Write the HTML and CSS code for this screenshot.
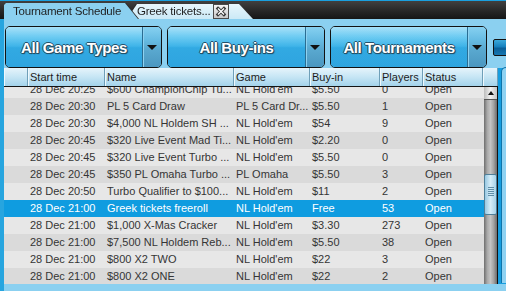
FILE: index.html
```html
<!DOCTYPE html>
<html>
<head>
<meta charset="utf-8">
<link rel="stylesheet" href="styles.css">
</head>
<body>
<div class="tabbar">
  <div class="tab-wrap active-wrap"><div class="tab tab-active">Tournament Schedule</div></div>
  <div class="tab-wrap other-wrap">
    <div class="tab tab-other"><span class="tab-text">Greek tickets...</span>
      <span class="close"><svg width="12" height="11" viewBox="0 0 12 11"><path d="M3 2.5L9 8.5M9 2.5L3 8.5" stroke="#3a3a3a" stroke-width="3.2" stroke-linecap="square"/><path d="M3 2.5L9 8.5M9 2.5L3 8.5" stroke="#ffffff" stroke-width="1.4"/></svg></span>
    </div>
  </div>
</div>
<div class="content">
  <div class="toolbar">
    <div class="dd w157"><div class="dd-label">All Game Types</div><div class="dd-arrow"><span class="tri"></span></div></div>
    <div class="dd w158"><div class="dd-label">All Buy-ins</div><div class="dd-arrow"><span class="tri"></span></div></div>
    <div class="dd w157"><div class="dd-label">All Tournaments</div><div class="dd-arrow"><span class="tri"></span></div></div>
    <div class="mini"></div>
  </div>
  <div class="panel">
    <div class="grid">
      <div class="hdr">
        <div class="hc c0"></div>
        <div class="hc c1">Start time</div>
        <div class="hc c2">Name</div>
        <div class="hc c3">Game</div>
        <div class="hc c4">Buy-in</div>
        <div class="hc c5">Players</div>
        <div class="hc c6">Status</div>
        <div class="hc c7"></div>
      </div>
      <div class="body">
        <div class="rows">
          <div class="rows-inner">
            <div class="row"><span class="c0"></span><span class="c1">28 Dec 20:25</span><span class="c2">$600 ChampionChip Tu...</span><span class="c3">NL Hold'em</span><span class="c4">$5.50</span><span class="c5">0</span><span class="c6">Open</span></div>
            <div class="row"><span class="c0"></span><span class="c1">28 Dec 20:30</span><span class="c2">PL 5 Card Draw</span><span class="c3">PL 5 Card Dr...</span><span class="c4">$5.50</span><span class="c5">1</span><span class="c6">Open</span></div>
            <div class="row"><span class="c0"></span><span class="c1">28 Dec 20:30</span><span class="c2">$4,000 NL Holdem SH ...</span><span class="c3">NL Hold'em</span><span class="c4">$54</span><span class="c5">9</span><span class="c6">Open</span></div>
            <div class="row"><span class="c0"></span><span class="c1">28 Dec 20:45</span><span class="c2">$320 Live Event Mad Ti...</span><span class="c3">NL Hold'em</span><span class="c4">$2.20</span><span class="c5">0</span><span class="c6">Open</span></div>
            <div class="row"><span class="c0"></span><span class="c1">28 Dec 20:45</span><span class="c2">$320 Live Event Turbo ...</span><span class="c3">NL Hold'em</span><span class="c4">$5.50</span><span class="c5">0</span><span class="c6">Open</span></div>
            <div class="row"><span class="c0"></span><span class="c1">28 Dec 20:45</span><span class="c2">$350 PL Omaha Turbo ...</span><span class="c3">PL Omaha</span><span class="c4">$5.50</span><span class="c5">3</span><span class="c6">Open</span></div>
            <div class="row"><span class="c0"></span><span class="c1">28 Dec 20:50</span><span class="c2">Turbo Qualifier to $100...</span><span class="c3">NL Hold'em</span><span class="c4">$11</span><span class="c5">2</span><span class="c6">Open</span></div>
            <div class="row sel"><span class="c0"></span><span class="c1">28 Dec 21:00</span><span class="c2">Greek tickets freeroll</span><span class="c3">NL Hold'em</span><span class="c4">Free</span><span class="c5">53</span><span class="c6">Open</span></div>
            <div class="row"><span class="c0"></span><span class="c1">28 Dec 21:00</span><span class="c2">$1,000 X-Mas Cracker</span><span class="c3">NL Hold'em</span><span class="c4">$3.30</span><span class="c5">273</span><span class="c6">Open</span></div>
            <div class="row"><span class="c0"></span><span class="c1">28 Dec 21:00</span><span class="c2">$7,500 NL Holdem Reb...</span><span class="c3">NL Hold'em</span><span class="c4">$5.50</span><span class="c5">38</span><span class="c6">Open</span></div>
            <div class="row"><span class="c0"></span><span class="c1">28 Dec 21:00</span><span class="c2">$800 X2 TWO</span><span class="c3">NL Hold'em</span><span class="c4">$22</span><span class="c5">3</span><span class="c6">Open</span></div>
            <div class="row"><span class="c0"></span><span class="c1">28 Dec 21:00</span><span class="c2">$800 X2 ONE</span><span class="c3">NL Hold'em</span><span class="c4">$22</span><span class="c5">2</span><span class="c6">Open</span></div>
          </div>
        </div>
        <div class="scroll">
          <div class="sb-up"><span class="tri-up"></span></div>
          <div class="sb-thumb"><span class="grip"></span></div>
        </div>
      </div>
    </div>
    <div class="edge"><div class="edge-panel"></div></div>
  </div>
</div>
</body>
</html>
```
FILE: styles.css
```css
* { box-sizing: border-box; }
html, body { margin: 0; padding: 0; }
body {
  width: 506px;
  height: 291px;
  overflow: hidden;
  background: #8bd0f0;
  font-family: "Liberation Sans", Arial, sans-serif;
  font-size: 11px;
  color: #222;
}

/* ---------- tabs ---------- */
.tabbar {
  height: 19px;
  display: flex;
  padding-left: 4px;
  background: linear-gradient(#1aa0e0 0, #1aa0e0 1px, #404040 1px, #262626 60%, #161616 100%);
}
.tab-wrap { height: 19px; }
.active-wrap { position: relative; z-index: 2; filter: drop-shadow(1px 0 0 #2a2a2a); }
.other-wrap { margin-left: -11px; z-index: 1; filter: drop-shadow(-1px 0 0 #2a2a2a); }
.tab {
  display: flex;
  align-items: center;
  white-space: nowrap;
  color: #1e1e1e;
}
.tab-active {
  margin-top: 3px;
  height: 16px;
  width: 134px;
  padding-left: 9px;
  font-size: 11.5px;
  letter-spacing: -0.2px;
  background: #8bd0f0;
  clip-path: polygon(0 16px, 0 2px, 2px 0, 121px 0, 134px 16px);
}
.tab-other {
  margin-top: 4px;
  height: 15px;
  width: 126px;
  padding-left: 10px;
  font-size: 11.5px;
  letter-spacing: -0.2px;
  background: linear-gradient(#e8f6fc, #cbe9f6);
  clip-path: polygon(0 15px, 10px 0, 112px 0, 126px 15px);
}
.tab-text { line-height: 15px; }
.close {
  margin-left: 2px;
  width: 16px;
  height: 15px;
  border: 1px solid #4a4a4a;
  background: linear-gradient(#f4f4f4, #c9c9c9);
  display: flex;
  align-items: center;
  justify-content: center;
}

/* ---------- content ---------- */
.content {
  border-left: 4px solid #27a5df;
  height: 272px;
}
.toolbar {
  display: flex;
  align-items: center;
  gap: 5px;
  padding: 7px 0 0 1px;
  height: 49px;
}
.dd {
  height: 42px;
  display: flex;
  border: 1px solid #121212;
  border-radius: 5px;
  overflow: hidden;
  flex: none;
}
.w157 { width: 157px; }
.w158 { width: 158px; }
.dd-label {
  flex: 1;
  display: flex;
  align-items: center;
  justify-content: center;
  color: #fff;
  font-weight: bold;
  font-size: 15px;
  letter-spacing: -0.4px;
  text-shadow: 1px 0 0 #24506a, -1px 0 0 #24506a, 0 1px 0 #24506a, 0 -1px 0 #24506a, 1px 1px 1px #1d3f55;
  background:
    radial-gradient(circle, rgba(255,255,255,0.18) 0.6px, transparent 1px) 0 0 / 2px 2px,
    linear-gradient(#9adcf8 0%, #56c3f0 25%, #22a9e6 48%, #129ddf 52%, #0f97da 100%);
}
.dd-arrow {
  width: 19px;
  flex: none;
  border-left: 1px solid #2a6d92;
  box-shadow: inset 1px 0 0 #8fd2f0;
  background: linear-gradient(#86d0f0 0%, #68bde4 30%, #5aa9d0 55%, #4b97c0 100%);
  display: flex;
  align-items: center;
  justify-content: center;
}
.tri {
  width: 0; height: 0;
  border-left: 5px solid transparent;
  border-right: 5px solid transparent;
  border-top: 5px solid #111;
}
.mini {
  flex: none;
  margin-left: 1px;
  width: 20px;
  height: 17px;
  border: 1px solid #111;
  border-radius: 2px;
  background: linear-gradient(#3ba9db 0%, #1680bd 45%, #0a5f98 55%, #1577b2 100%);
}

/* ---------- panel ---------- */
.panel {
  display: flex;
  height: 216px;
}
.grid { width: 494px; display: flex; flex-direction: column; }
.hdr {
  display: flex;
  height: 19px;
  border-bottom: 1px solid #141414;
  background: linear-gradient(#e6f4fb 0%, #c9e7f5 45%, #a4d3eb 100%);
}
.hc {
  height: 18px;
  line-height: 18px;
  padding-left: 2px;
  color: #1c1c1c;
  border-right: 1px solid #6f9fb8;
  box-shadow: inset 1px 0 0 #eef8fd;
  white-space: nowrap;
  overflow: hidden;
}
.c0 { width: 24px; }
.c1 { width: 77px; }
.c2 { width: 129px; }
.c3 { width: 76px; }
.c4 { width: 70px; }
.c5 { width: 43px; }
.c6 { width: 60px; }
.c7 { width: 15px; }

.body { display: flex; height: 197px; }
.rows { width: 480px; height: 197px; overflow: hidden; }
.rows-inner { margin-top: -6px; }
.row {
  display: flex;
  height: 17px;
  line-height: 17px;
  color: #353535;
  background: #e7e7e7;
  white-space: nowrap;
}
.row:nth-child(even) { background: #dadada; }
.row.sel { background: #0f9ce0; color: #fff; }
.row span { display: block; padding-left: 2px; overflow: hidden; flex: none; }
.row .c6 { width: 61px; }

.scroll {
  width: 14px;
  border-right: 1px solid #121212;
  background: linear-gradient(to right, #6e6e6e 0%, #a9a9a9 25%, #c4c4c4 50%, #a2a2a2 75%, #6c6c6c 100%);
}
.sb-up {
  height: 13px;
  border-bottom: 1px solid #555;
  background: linear-gradient(to right, #bdbdbd, #f2f2f2 50%, #c4c4c4);
  display: flex;
  align-items: center;
  justify-content: center;
}
.tri-up {
  width: 0; height: 0;
  border-left: 3px solid transparent;
  border-right: 3px solid transparent;
  border-bottom: 4px solid #111;
}
.sb-thumb {
  margin-top: 74px;
  height: 41px;
  border: 1px solid #4f7f99;
  border-radius: 2px;
  background: linear-gradient(to right, #98c8e2, #d6edf8 50%, #a7d2e9);
  display: flex;
  align-items: center;
  justify-content: center;
}
.grip {
  width: 6px;
  height: 9px;
  margin-top: -6px;
  background: repeating-linear-gradient(#5f8ea8 0, #5f8ea8 1px, transparent 1px, transparent 2px);
}

.edge {
  width: 8px;
  background: #179ddf;
  padding: 0 0 0 3px;
}
.edge-panel {
  height: 100%;
  margin-top: -1px;
  border-top: 1px solid #0d74aa;
  border-left: 1px solid #0d74aa;
  border-top-left-radius: 6px;
  background: #8fd2f2;
}
```
